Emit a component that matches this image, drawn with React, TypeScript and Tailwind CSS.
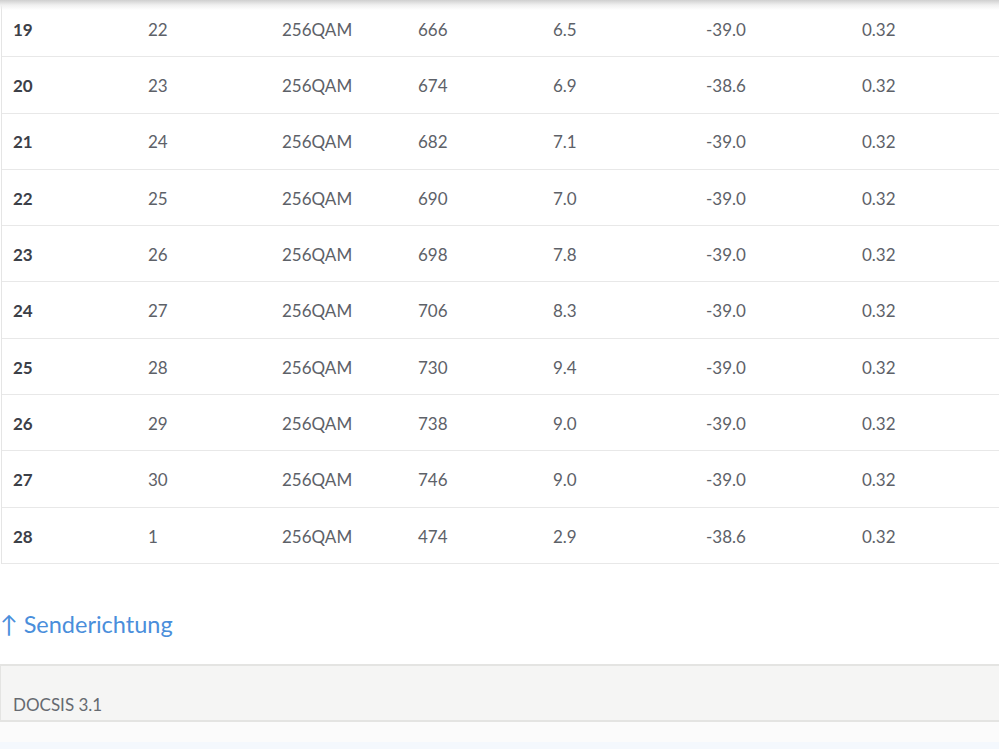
const rows: [string, string, string, string, string, string, string][] = [
  ['19', '22', '256QAM', '666', '6.5', '-39.0', '0.32'],
  ['20', '23', '256QAM', '674', '6.9', '-38.6', '0.32'],
  ['21', '24', '256QAM', '682', '7.1', '-39.0', '0.32'],
  ['22', '25', '256QAM', '690', '7.0', '-39.0', '0.32'],
  ['23', '26', '256QAM', '698', '7.8', '-39.0', '0.32'],
  ['24', '27', '256QAM', '706', '8.3', '-39.0', '0.32'],
  ['25', '28', '256QAM', '730', '9.4', '-39.0', '0.32'],
  ['26', '29', '256QAM', '738', '9.0', '-39.0', '0.32'],
  ['27', '30', '256QAM', '746', '9.0', '-39.0', '0.32'],
  ['28', '1', '256QAM', '474', '2.9', '-38.6', '0.32'],
]

function ChannelRow({ row }: { row: (typeof rows)[number] }) {
  const [id, ...rest] = row
  return (
    <div className="grid h-[56.3px] grid-cols-[135px_134px_136px_135px_153px_156px_1fr] items-center border-b border-[#e8e8e8] pt-[2px]">
      <div className="pl-[11px] font-bold text-[#3c4048]">{id}</div>
      {rest.map((cell, i) => (
        <div key={i} className="pl-[11px] text-[#5d6168]">
          {cell}
        </div>
      ))}
    </div>
  )
}

export default function App() {
  return (
    <div
      className="relative h-[749px] w-full overflow-hidden bg-white text-[17px]"
      style={{ fontFamily: 'Lato, "Noto Sans", sans-serif' }}
    >
      <div className="pointer-events-none absolute inset-x-0 top-0 h-[10px] bg-gradient-to-b from-[#cfcfcf] via-[#f0f0f0] to-transparent" />

      <div className="ml-[1px] mt-[1px] border-l border-[#e5e5e5]">
        {rows.map((row) => (
          <ChannelRow key={row[0]} row={row} />
        ))}
      </div>

      <h2 className="mt-[43px] text-[23.5px] leading-[34px] text-[#4a8edb]">↑ Senderichtung</h2>

      <div className="mt-[23px] flex h-[58px] items-end border-y-2 border-l border-[#e4e4e2] bg-[#f5f5f4] pb-[2px] pl-[12px] text-[#666a70]">
        DOCSIS 3.1
      </div>
      <div className="h-[20px] bg-[#fbfbfb]" />
      <div className="h-[20px] bg-[#f4f8fd]" />
    </div>
  )
}
